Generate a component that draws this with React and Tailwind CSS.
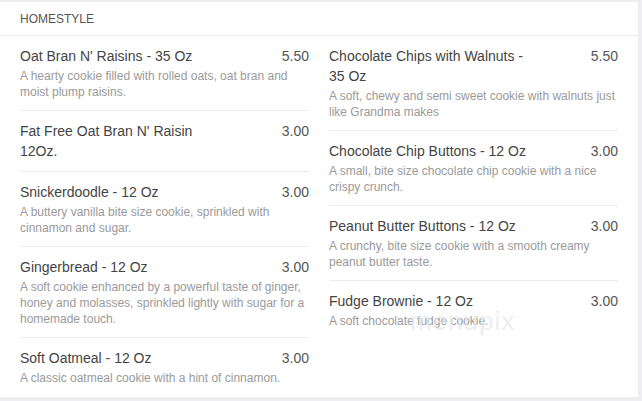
import React from "react";

const left = [
  { t: "Oat Bran N' Raisins - 35 Oz", p: "5.50", d: "A hearty cookie filled with rolled oats, oat bran and moist plump raisins." },
  { t: "Fat Free Oat Bran N' Raisin 12Oz.", p: "3.00", d: "" },
  { t: "Snickerdoodle - 12 Oz", p: "3.00", d: "A buttery vanilla bite size cookie, sprinkled with cinnamon and sugar." },
  { t: "Gingerbread - 12 Oz", p: "3.00", d: "A soft cookie enhanced by a powerful taste of ginger, honey and molasses, sprinkled lightly with sugar for a homemade touch." },
  { t: "Soft Oatmeal - 12 Oz", p: "3.00", d: "A classic oatmeal cookie with a hint of cinnamon." },
];
const right = [
  { t: "Chocolate Chips with Walnuts - 35 Oz", p: "5.50", d: "A soft, chewy and semi sweet cookie with walnuts just like Grandma makes" },
  { t: "Chocolate Chip Buttons - 12 Oz", p: "3.00", d: "A small, bite size chocolate chip cookie with a nice crispy crunch." },
  { t: "Peanut Butter Buttons - 12 Oz", p: "3.00", d: "A crunchy, bite size cookie with a smooth creamy peanut butter taste." },
  { t: "Fudge Brownie - 12 Oz", p: "3.00", d: "A soft chocolate fudge cookie." },
];

function Item({ it, last }) {
  return (
    <div className={"py-[10px] " + (last ? "" : "border-b border-[#ececec]")}>
      <div className="flex justify-between gap-4 text-[14px] leading-[20px] text-[#444]">
        <span className="max-w-[205px]">{it.t}</span>
        <span className="text-[#555]">{it.p}</span>
      </div>
      {it.d && (
        <div className="mt-[2px] text-[12px] leading-[16px] text-[#9a9a9a]">{it.d}</div>
      )}
    </div>
  );
}

export default function App() {
  return (
    <div
      className="w-[642px] h-[401px] bg-[#eeeef2] pt-[2px] overflow-hidden"
      style={{ fontFamily: '"Liberation Sans", Arial, sans-serif' }}
    >
      <div className="relative w-[638px] h-[395px] bg-white">
        <div className="h-[34px] flex items-center px-5 border-b border-[#ececec] text-[12px] text-[#555]">
          HOMESTYLE
        </div>
        <div className="grid grid-cols-2 gap-5 px-5">
          <div>
            {left.map((it, i) => (
              <Item key={i} it={it} last={i === left.length - 1} />
            ))}
          </div>
          <div>
            {right.map((it, i) => (
              <Item key={i} it={it} last={i === right.length - 1} />
            ))}
          </div>
        </div>
        <div className="absolute left-[410px] top-[306px] text-[26px] leading-none tracking-[1px] text-[#e8e8e8] pointer-events-none select-none" style={{ opacity: 0.7 }}>
          menupix
        </div>
      </div>
    </div>
  );
}
